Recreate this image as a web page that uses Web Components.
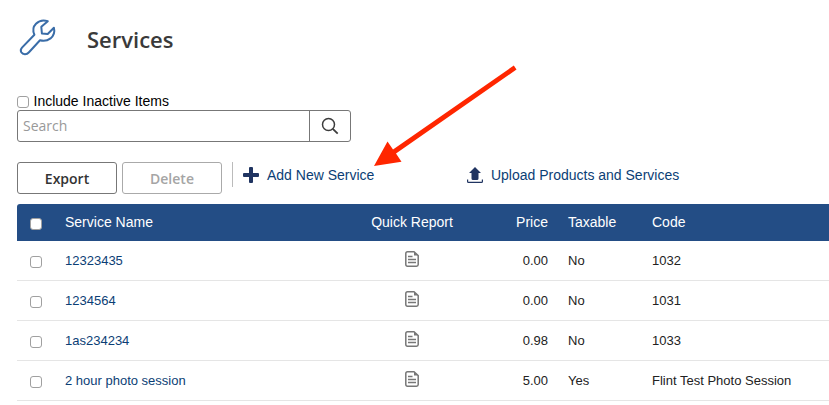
<!DOCTYPE html>
<html lang="en">
<head>
<meta charset="utf-8">
<title>Services</title>
<style>
  body {
    margin: 0;
    background: #fff;
    font-family: "Liberation Sans", Arial, sans-serif;
    font-size: 14px;
    overflow: hidden;
  }
</style>
</head>
<body>
<services-page></services-page>

<script>
class CheckBox extends HTMLElement {
  constructor() {
    super();
    this.attachShadow({ mode: 'open' });
  }

  connectedCallback() {
    this.shadowRoot.innerHTML = `
      <style>
        :host {
          display: block;
          flex: none;
          box-sizing: border-box;
          width: 12px;
          height: 12px;
          border: 1px solid #a0a0a0;
          border-radius: 3px;
          background: #fff;
        }
      </style>
    `;
  }
}

class PageHeading extends HTMLElement {
  constructor() {
    super();
    this.attachShadow({ mode: 'open' });
  }

  connectedCallback() {
    this.shadowRoot.innerHTML = `
      <style>
        :host {
          display: flex;
          align-items: center;
          gap: 29px;
          height: 40px;
        }

        svg {
          display: block;
          margin-left: 1px;
        }

        h1 {
          margin: 3px 0 0;
          font: 600 22px/30px "Open Sans", sans-serif;
          color: #3a3a3a;
        }
      </style>
      <svg width="40" height="40" viewBox="18 17 40 40" fill="none" stroke="#3a6da8" stroke-width="2" stroke-linejoin="round">
        <path d="M47.8 21.2 L41.3 26.8 L41.9 33.5 L47.7 34 L53.9 27.7 C55 32 53.6 35.8 50.5 38.4 C47.5 40.7 43.5 41.3 40 40.3 L29 52.3 C26.6 55 22.8 54.6 21.3 52.2 C20.3 50.4 20.7 49 22 47.6 L34.4 34.7 C32.8 31 33.2 26.500 36 23.700 C39 20.700 43.500 19.800 47.800 21.200 Z"/>
      </svg>
      <h1><slot></slot></h1>
    `;
  }
}

class SearchBox extends HTMLElement {
  constructor() {
    super();
    this.attachShadow({ mode: 'open' });
  }

  connectedCallback() {
    const placeholder = this.getAttribute('placeholder');

    this.shadowRoot.innerHTML = `
      <style>
        :host {
          display: flex;
          box-sizing: border-box;
          width: 334px;
          height: 32px;
          border: 1px solid #777;
          border-radius: 3px;
        }

        input {
          flex: 1;
          min-width: 0;
          padding: 0 5px 2px;
          border: 0;
          outline: none;
          background: none;
          font: 14px "Open Sans", sans-serif;
        }

        input::placeholder {
          color: #999;
          opacity: 1;
        }

        button {
          display: flex;
          align-items: center;
          justify-content: center;
          width: 41px;
          padding: 0;
          border: 0;
          border-left: 1px solid #777;
          background: none;
        }
      </style>
      <input type="text" placeholder="${placeholder}">
      <button type="button" aria-label="${placeholder}">
        <svg width="18" height="18" viewBox="0 0 18 18" fill="none" stroke="#3c3c3c" stroke-width="1.5">
          <circle cx="7.5" cy="7.5" r="6"/>
          <path d="M11.8 11.8 L16.7 16.7" stroke-width="1.8"/>
        </svg>
      </button>
    `;
  }
}

class PushButton extends HTMLElement {
  constructor() {
    super();
    this.attachShadow({ mode: 'open' });
  }

  connectedCallback() {
    this.shadowRoot.innerHTML = `
      <style>
        :host {
          display: flex;
          align-items: center;
          justify-content: center;
          box-sizing: border-box;
          width: 100px;
          height: 32px;
          padding-top: 2px;
          border: 1px solid #777;
          border-radius: 3px;
          font: 600 14px/20px "Open Sans", sans-serif;
          color: #333;
        }

        :host([disabled]) {
          border-color: #aaa;
          color: #a5a5a5;
        }
      </style>
      <slot></slot>
    `;
  }
}

class ActionLink extends HTMLElement {
  constructor() {
    super();
    this.attachShadow({ mode: 'open' });
  }

  connectedCallback() {
    const icons = {
      plus: '<rect x="6" y="0" width="4" height="16" rx="1"/><rect x="0" y="6" width="16" height="4" rx="1"/>',
      upload: '<path d="M8 0 L14 6 H11.5 V11.5 Q11.5 13 10 13 H6 Q4.5 13 4.5 11.5 V6 H2 Z"/><path d="M.6 12.5 V14.5 Q.6 15.4 1.5 15.4 H14.5 Q15.4 15.4 15.4 14.5 V12.5" fill="none" stroke="#203461" stroke-width="1.2"/>'
    };

    this.shadowRoot.innerHTML = `
      <style>
        :host {
          display: flex;
          align-items: center;
          gap: 8px;
          line-height: 16px;
          white-space: nowrap;
          color: #0b3e75;
        }

        svg {
          display: block;
        }
      </style>
      <svg width="16" height="16" viewBox="0 0 16 16" fill="#203461">${icons[this.getAttribute('icon')]}</svg>
      <span><slot></slot></span>
    `;
  }
}

class ServiceRow extends HTMLElement {
  constructor() {
    super();
    this.attachShadow({ mode: 'open' });
  }

  connectedCallback() {
    const header = this.hasAttribute('header');
    const report = header
      ? 'Quick Report'
      : `<svg width="14" height="16" viewBox="0 0 14 16" fill="none" stroke="#777" stroke-width="1.5">
          <path d="M2.5 .8 H9 L13.2 4.5 V13.5 Q13.2 15.2 11.5 15.2 H2.5 Q.8 15.2 .8 13.5 V2.5 Q.8 .8 2.5 .8 Z"/>
          <path d="M9 .8 V4.5 H13.2 Z" fill="#777" stroke="none"/>
          <path d="M3 5.5 H7.5 M3 8.5 H11 M3 11.5 H11" stroke-width="1.3"/>
        </svg>`;

    this.shadowRoot.innerHTML = `
      <style>
        :host {
          display: grid;
          grid-template-columns: 48px 306px 82px 95px 104px 1fr;
          align-items: center;
          box-sizing: border-box;
          height: 40px;
          border-bottom: 1px solid #e5e5e5;
          font-size: 13px;
          line-height: 16px;
          white-space: nowrap;
          color: #222;
        }

        :host([header]) {
          height: 37px;
          padding-bottom: 1px;
          border: 0;
          border-radius: 3px 0 0 0;
          background: #234d85;
          font-size: 14px;
          color: #fff;
        }

        check-box {
          margin: 3px 0 0 13px;
        }

        :host([header]) check-box {
          margin-top: 4px;
        }

        .name {
          color: #0b3e75;
        }

        :host([header]) .name {
          color: #fff;
        }

        .report {
          display: flex;
          justify-content: center;
        }

        svg {
          display: block;
          margin-top: -3px;
        }

        .price {
          text-align: right;
        }

        .taxable {
          padding-left: 20px;
        }
      </style>
      <check-box></check-box>
      <div class="name">${this.getAttribute('name')}</div>
      <div class="report">${report}</div>
      <div class="price">${this.getAttribute('price')}</div>
      <div class="taxable">${this.getAttribute('taxable')}</div>
      <div>${this.getAttribute('code')}</div>
    `;
  }
}

class PointerArrow extends HTMLElement {
  constructor() {
    super();
    this.attachShadow({ mode: 'open' });
  }

  connectedCallback() {
    this.shadowRoot.innerHTML = `
      <style>
        :host {
          display: block;
          pointer-events: none;
        }

        svg {
          display: block;
        }
      </style>
      <svg width="144" height="102" viewBox="373 65 144 102" fill="#ff2600">
        <path d="M374 166 L387.5 141.5 L393 149.5 L513.8 65.5 L516.5 69.5 L396 153.5 L401.5 161.8 Z"/>
      </svg>
    `;
  }
}

class ServicesPage extends HTMLElement {
  constructor() {
    super();
    this.attachShadow({ mode: 'open' });
  }

  connectedCallback() {
    this.shadowRoot.innerHTML = `
      <style>
        :host {
          display: block;
          position: relative;
          box-sizing: border-box;
          height: 405px;
          padding: 17px 0 0 17px;
        }

        .inactive {
          display: flex;
          align-items: center;
          gap: 4.5px;
          margin-top: 36px;
          line-height: 16px;
          color: #000;
        }

        .inactive check-box {
          margin-top: 2px;
        }

        search-box {
          margin-top: 1px;
        }

        .toolbar {
          display: flex;
          align-items: flex-start;
          margin: 20px 0 10px;
        }

        push-button + push-button {
          margin-left: 5px;
        }

        .divider {
          width: 1px;
          height: 25px;
          margin: 0 10px;
          background: #bbb;
        }

        action-link {
          margin-top: 5px;
        }

        action-link + action-link {
          margin-left: 92.5px;
        }

        pointer-arrow {
          position: absolute;
          left: 373px;
          top: 65px;
        }
      </style>
      <page-heading>Services</page-heading>
      <div class="inactive"><check-box></check-box><span>Include Inactive Items</span></div>
      <search-box placeholder="Search"></search-box>
      <div class="toolbar">
        <push-button>Export</push-button>
        <push-button disabled>Delete</push-button>
        <div class="divider"></div>
        <action-link icon="plus">Add New Service</action-link>
        <action-link icon="upload">Upload Products and Services</action-link>
      </div>
      <service-row header name="Service Name" price="Price" taxable="Taxable" code="Code"></service-row>
      <service-row name="12323435" price="0.00" taxable="No" code="1032"></service-row>
      <service-row name="1234564" price="0.00" taxable="No" code="1031"></service-row>
      <service-row name="1as234234" price="0.98" taxable="No" code="1033"></service-row>
      <service-row name="2 hour photo session" price="5.00" taxable="Yes" code="Flint Test Photo Session"></service-row>
      <pointer-arrow></pointer-arrow>
    `;
  }
}

customElements.define('check-box', CheckBox);
customElements.define('page-heading', PageHeading);
customElements.define('search-box', SearchBox);
customElements.define('push-button', PushButton);
customElements.define('action-link', ActionLink);
customElements.define('service-row', ServiceRow);
customElements.define('pointer-arrow', PointerArrow);
customElements.define('services-page', ServicesPage);
</script>
</body>
</html>
